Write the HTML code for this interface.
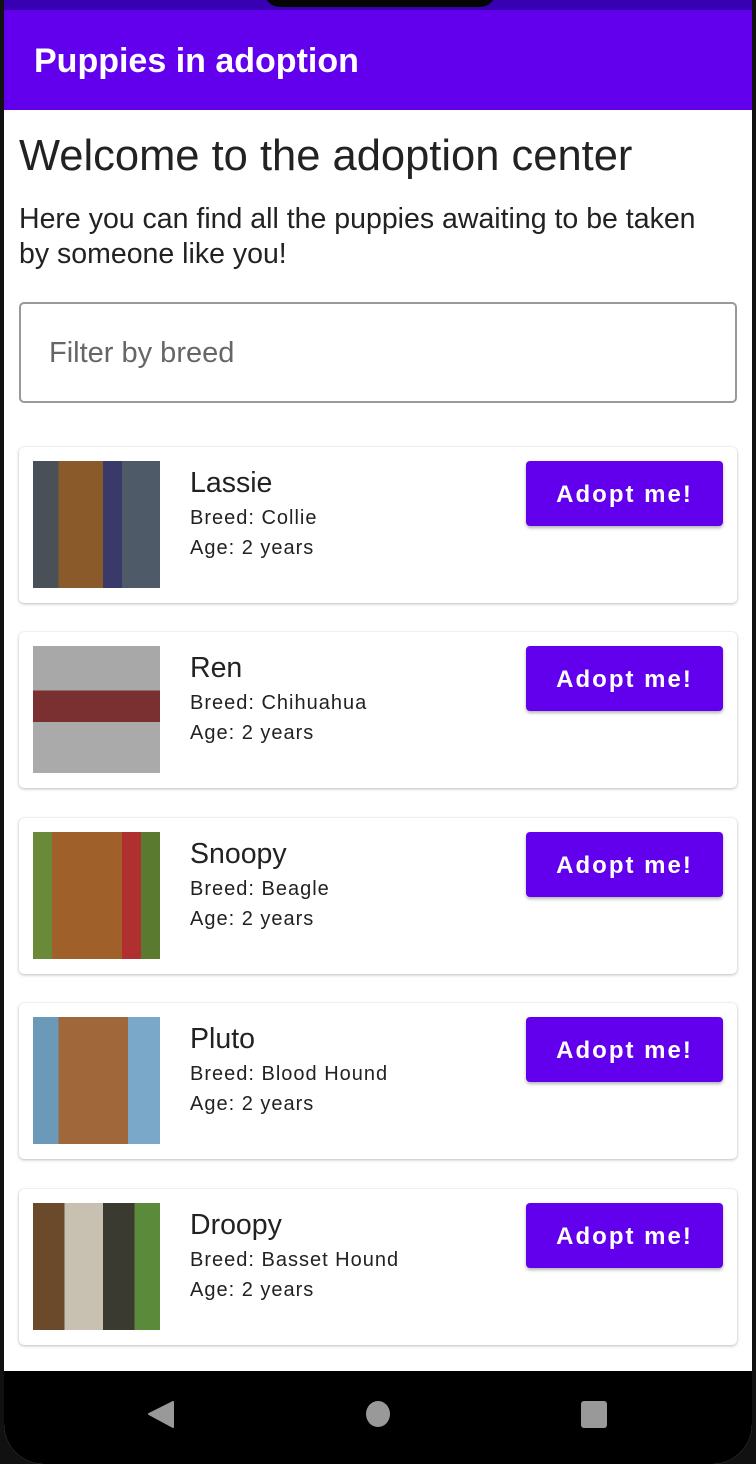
<!DOCTYPE html>
<html><head><meta charset="utf-8"><style>
*{margin:0;padding:0;box-sizing:border-box}
body{width:756px;height:1464px;background:#111;font-family:"Liberation Sans",sans-serif;position:relative;overflow:hidden}
.screen{position:absolute;left:4px;top:0;width:748px;height:1464px;background:#fff;border-radius:0 0 40px 40px;overflow:hidden}
.status{position:absolute;left:0;top:0;width:748px;height:10px;background:#3700B3}
.notch{position:absolute;left:260px;top:-10px;width:232px;height:17px;background:#050505;border-radius:0 0 16px 16px}
.bar{position:absolute;left:0;top:10px;width:748px;height:100px;background:#6200EE;color:#fff;font-size:34px;font-weight:bold;padding:32px 0 0 30px}
.t{position:absolute;color:#222}
.h1{left:15px;top:132px;font-size:43.5px}
.p{left:15px;top:202px;font-size:28.5px;line-height:35px;width:705px}
.field{position:absolute;left:15px;top:302px;width:718px;height:101px;border:2px solid #999;border-radius:5px;color:#666;font-size:29px;padding:33px 0 0 28px}
.card{position:absolute;left:15px;width:718px;height:156px;background:#fff;border-radius:5px;box-shadow:0 1px 3px rgba(0,0,0,.25),0 0 1px rgba(0,0,0,.12)}
.img{position:absolute;left:14px;top:14px;width:127px;height:127px}
.name{position:absolute;left:171px;top:20px;font-size:28.5px;color:#222}
.info{position:absolute;left:171px;top:56px;font-size:20px;line-height:30px;color:#222;letter-spacing:1px}
.btn{position:absolute;left:507px;top:14px;width:197px;height:65px;background:#6200EE;color:#fff;border-radius:4px;font-size:24px;font-weight:bold;letter-spacing:2px;text-align:center;line-height:68px;box-shadow:0 2px 3px rgba(0,0,0,.3)}
.nav{position:absolute;left:0;top:1371px;width:748px;height:93px;background:#000}
</style></head><body>
<div class="screen">
<div class="status"></div><div class="notch"></div>
<div class="bar">Puppies in adoption</div>
<div class="t h1">Welcome to the adoption center</div>
<div class="t p">Here you can find all the puppies awaiting to be taken by someone like you!</div>
<div class="field">Filter by breed</div>

<div class="card" style="top:447px"><div class="img" style="background:linear-gradient(90deg,#4a5058 0 20%,#8a5a2a 20% 55%,#3a3a6a 55% 70%,#4f5a68 70%)"></div><div class="name">Lassie</div><div class="info">Breed: Collie<br>Age: 2 years</div><div class="btn">Adopt me!</div></div>
<div class="card" style="top:632px"><div class="img" style="background:linear-gradient(180deg,#a8a8a8 0 35%,#7a3030 35% 60%,#aaa 60%)"></div><div class="name">Ren</div><div class="info">Breed: Chihuahua<br>Age: 2 years</div><div class="btn">Adopt me!</div></div>
<div class="card" style="top:818px"><div class="img" style="background:linear-gradient(90deg,#6a8a3a 0 15%,#a0602a 15% 70%,#b03030 70% 85%,#5a7a30 85%)"></div><div class="name">Snoopy</div><div class="info">Breed: Beagle<br>Age: 2 years</div><div class="btn">Adopt me!</div></div>
<div class="card" style="top:1003px"><div class="img" style="background:linear-gradient(90deg,#6a9ab8 0 20%,#a0683a 20% 75%,#7aa8c8 75%)"></div><div class="name">Pluto</div><div class="info">Breed: Blood Hound<br>Age: 2 years</div><div class="btn">Adopt me!</div></div>
<div class="card" style="top:1189px"><div class="img" style="background:linear-gradient(90deg,#6a4a2a 0 25%,#c8c0b0 25% 55%,#3a3a30 55% 80%,#5a8a3a 80%)"></div><div class="name">Droopy</div><div class="info">Breed: Basset Hound<br>Age: 2 years</div><div class="btn">Adopt me!</div></div>

<div class="nav">
<svg width="748" height="93" style="position:absolute;left:0;top:0">
<path d="M169 31 L145 43 L169 56 Z" fill="#999" stroke="#999" stroke-linejoin="round" stroke-width="2"/>
<ellipse cx="374" cy="43" rx="12" ry="13" fill="#999"/>
<rect x="577" y="30" width="26" height="27" rx="3" fill="#999"/>
</svg>
</div>
</div>
</body></html>
